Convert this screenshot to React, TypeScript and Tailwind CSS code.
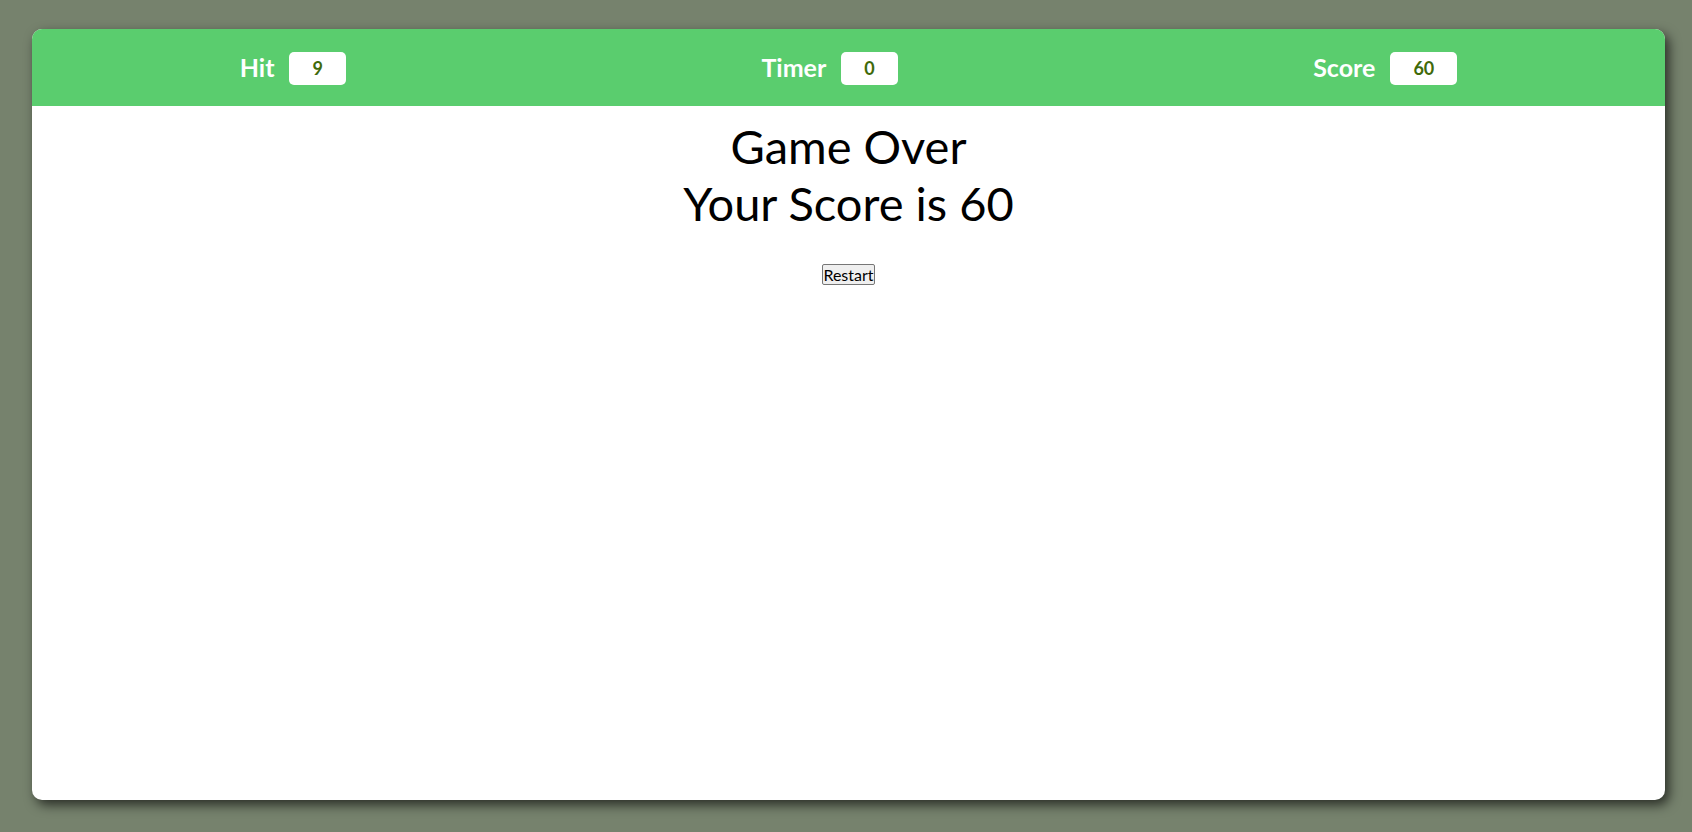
import React from 'react';

const stats = [
  { label: 'Hit', value: '9' },
  { label: 'Timer', value: '0' },
  { label: 'Score', value: '60' },
];

export default function App() {
  return (
    <div
      className="min-h-[832px] bg-[#76826d] pt-[29px] pl-[32px] pb-[32px]"
      style={{ fontFamily: 'Lato, "Open Sans", sans-serif' }}
    >
      <div className="w-[1633px] h-[771px] bg-white rounded-[10px] overflow-hidden shadow-[4px_5px_12px_rgba(0,0,0,0.65)] flex flex-col">
        {/* Header bar */}
        <div className="h-[77px] bg-[#5acd6e] flex items-center justify-around shrink-0">
          {stats.map((s) => (
            <div key={s.label} className="flex items-center gap-[15px] pt-[1px]">
              <span className="text-white font-bold text-[25px]">{s.label}</span>
              <span className="px-[23px] h-[33px] bg-white rounded-[5px] flex items-center justify-center text-[#3f6a0a] font-bold text-[18px]">
                {s.value}
              </span>
            </div>
          ))}
        </div>

        {/* Game over panel */}
        <div className="flex flex-col items-center pt-[12px] text-black">
          <h1 className="text-[47px] leading-[57px] font-normal text-center">
            Game Over
            <br />
            Your Score is 60
          </h1>
          <button className="mt-[32px] px-0 h-[21px] text-[16px] leading-none bg-[#efefef] border border-[#767676] rounded-[2px]">
            Restart
          </button>
        </div>
      </div>
    </div>
  );
}
